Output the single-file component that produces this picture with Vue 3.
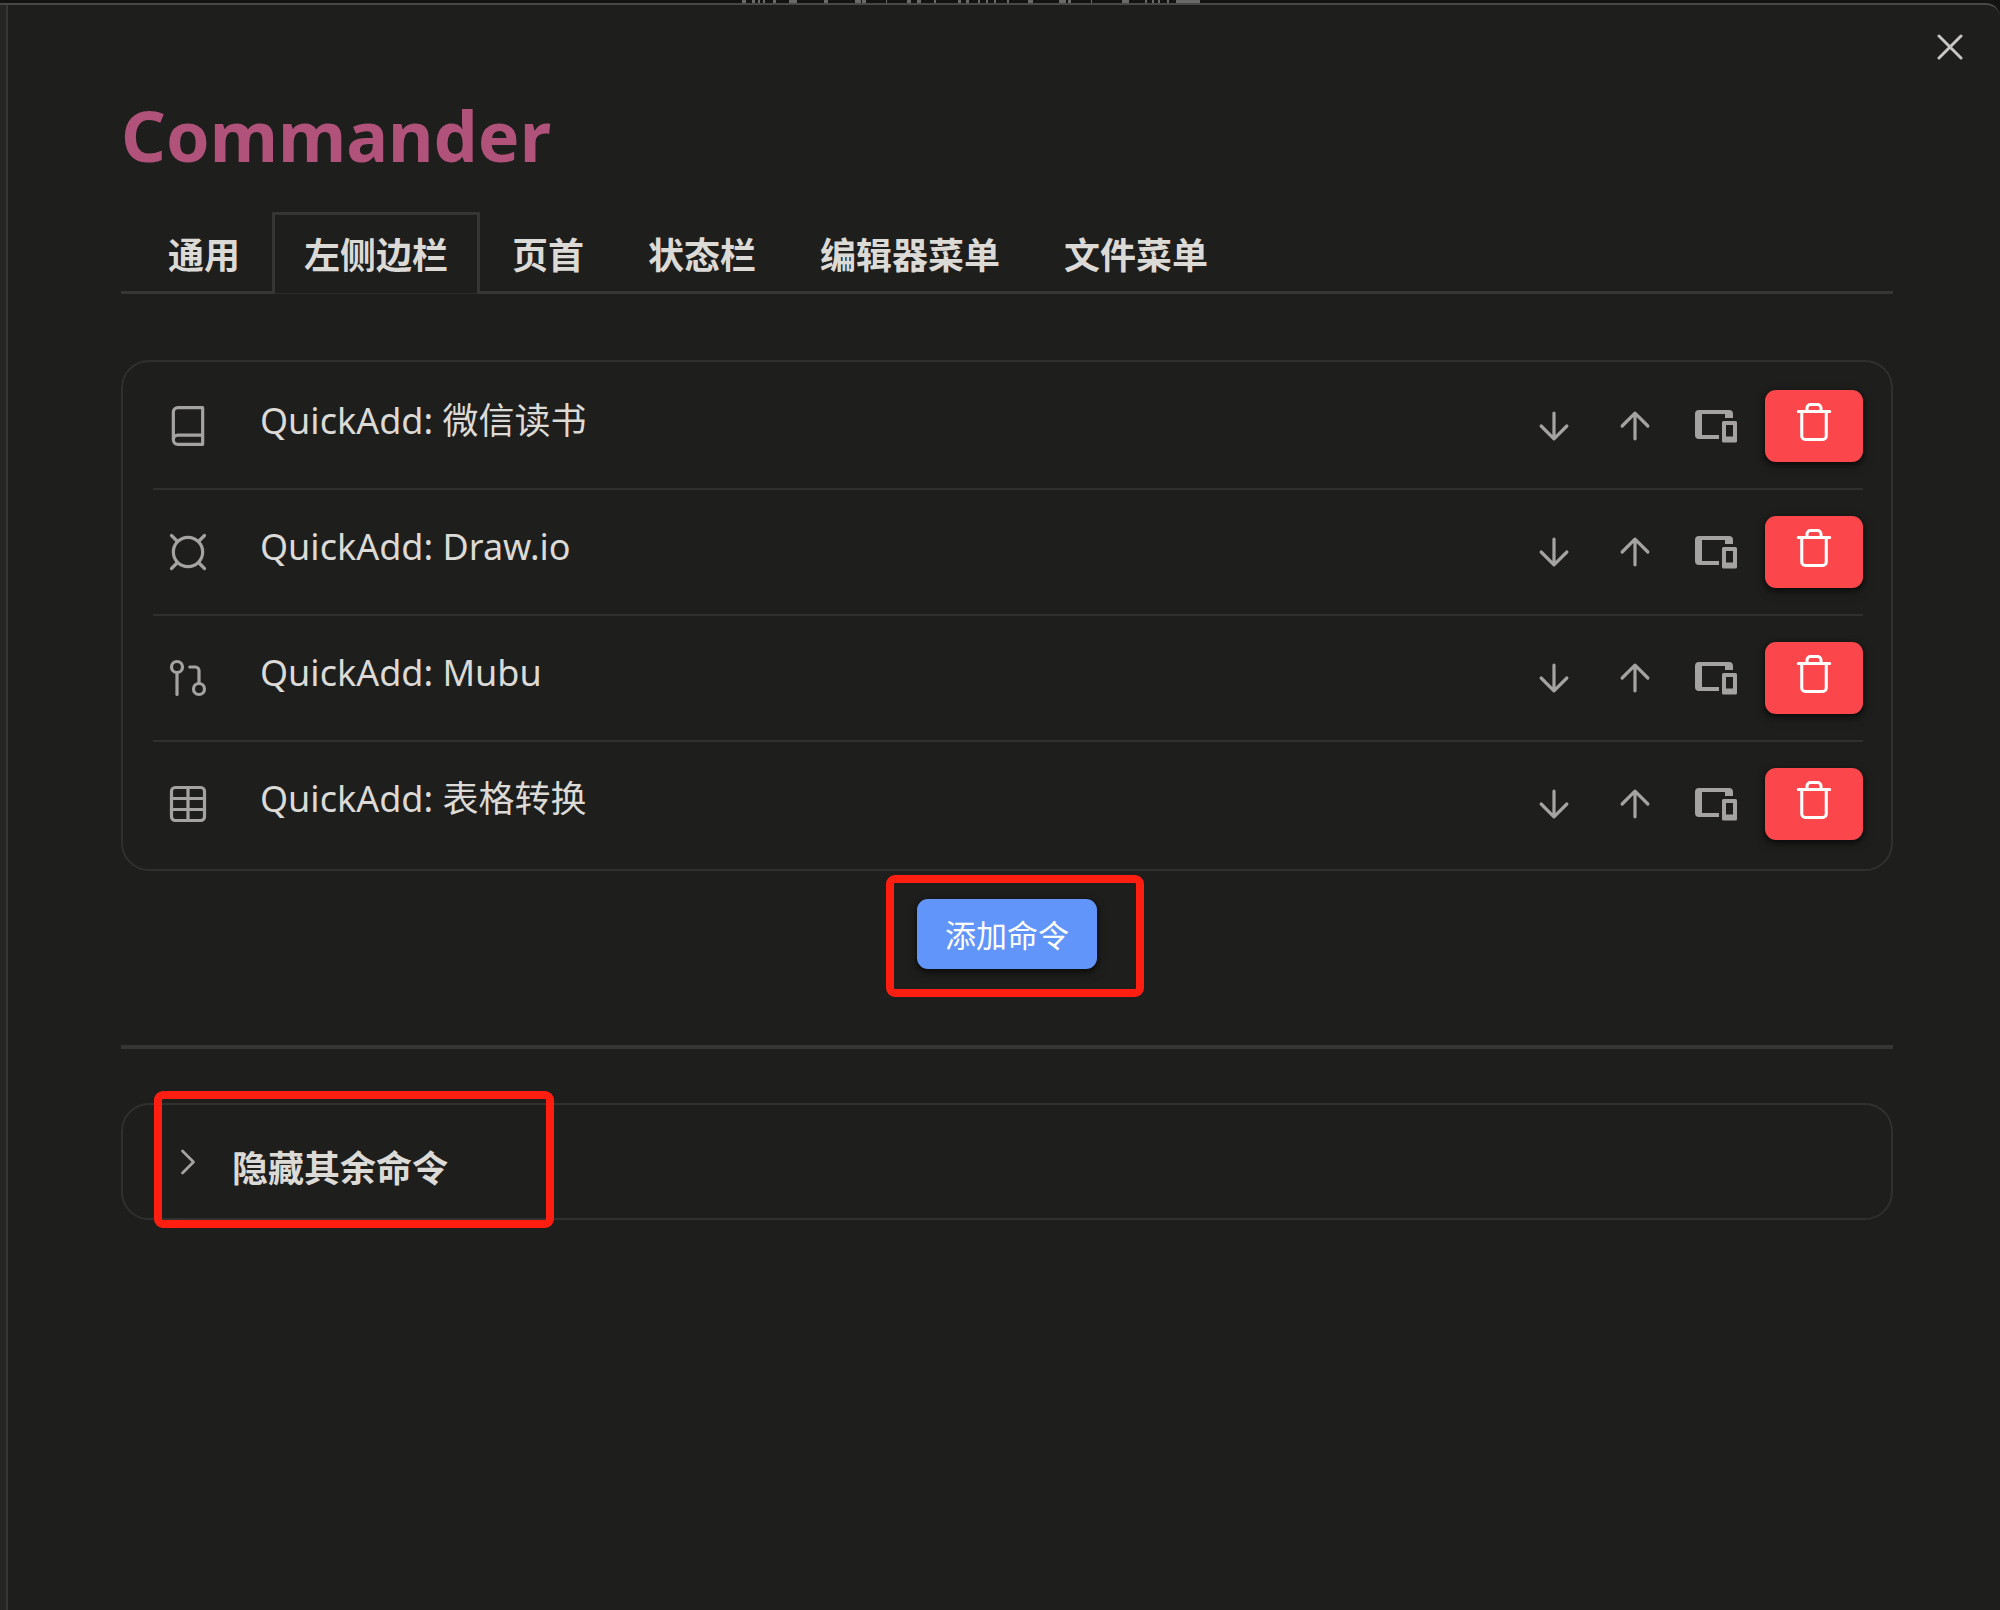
<script setup>
import { ref } from 'vue'

const tabs = ['通用', '左侧边栏', '页首', '状态栏', '编辑器菜单', '文件菜单']
const activeTab = ref(1)

const commands = ref([
  { name: 'QuickAdd: 微信读书', icon: 'book' },
  { name: 'QuickAdd: Draw.io', icon: 'currency' },
  { name: 'QuickAdd: Mubu', icon: 'git' },
  { name: 'QuickAdd: 表格转换', icon: 'table' },
])

const icons = {
  book: ['M4 19.5v-15A2.5 2.5 0 0 1 6.5 2H20v20H6.5A2.5 2.5 0 0 1 4 19.5A2.5 2.5 0 0 1 6.5 17H20'],
  currency: ['M12 4a8 8 0 1 0 0 16a8 8 0 1 0 0-16', 'M3 3l3 3', 'M21 3l-3 3', 'M3 21l3-3', 'M21 21l-3-3'],
  git: ['M18 15a3 3 0 1 0 0 6a3 3 0 1 0 0-6', 'M6 3a3 3 0 1 0 0 6a3 3 0 1 0 0-6', 'M13 6h3a2 2 0 0 1 2 2v7', 'M6 9v12'],
  table: ['M5 3h14a2 2 0 0 1 2 2v14a2 2 0 0 1-2 2H5a2 2 0 0 1-2-2V5a2 2 0 0 1 2-2z', 'M12 3v18', 'M3 9h18', 'M3 15h18'],
}

// x position and width of each visible stroke of the page title behind the dialog
const backdropMarks = [
  [0, 4], [10, 3], [16, 2], [21, 2], [31, 3], [47, 8], [82, 4], [113, 6], [120, 4], [144, 1],
  [165, 4], [175, 4], [192, 2], [216, 3], [224, 3], [236, 2], [244, 2], [252, 2], [265, 2],
  [286, 5], [317, 7], [326, 3], [349, 1], [380, 7], [403, 2], [410, 2], [416, 2], [425, 2], [434, 24],
]

function move(index, step) {
  const target = index + step
  if (target < 0 || target >= commands.value.length) return
  const [item] = commands.value.splice(index, 1)
  commands.value.splice(target, 0, item)
}
</script>

<template>
  <div class="page">
    <div class="backdrop">
      <svg width="458" height="3" viewBox="0 0 458 3" aria-hidden="true">
        <rect v-for="[x, w] in backdropMarks" :key="x" :x="x" y="0" :width="w" height="3" fill="#6a6a6a" />
      </svg>
    </div>
    <div class="dialog">
      <aside class="sidebar"></aside>
      <main class="content">
        <button class="close" type="button" aria-label="关闭">
          <svg viewBox="0 0 26 26" width="26" height="26" fill="none" stroke="currentColor" stroke-width="3" stroke-linecap="round">
            <path d="M2 2l22 22M24 2L2 24" />
          </svg>
        </button>

        <h1>Commander</h1>

        <nav class="tabs" role="tablist">
          <button
            v-for="(tab, i) in tabs"
            :key="tab"
            class="tab"
            :class="{ active: i === activeTab }"
            type="button"
            role="tab"
            :aria-selected="i === activeTab"
            @click="activeTab = i"
          >{{ tab }}</button>
        </nav>

        <ul class="card commands">
          <li v-for="(command, i) in commands" :key="command.name" class="command">
            <svg class="line-icon" viewBox="0 0 24 24">
              <path v-for="d in icons[command.icon]" :key="d" :d="d" />
            </svg>
            <span class="name">{{ command.name }}</span>
            <div class="actions">
              <button class="icon-button" type="button" aria-label="下移" @click="move(i, 1)">
                <svg class="line-icon" viewBox="0 0 24 24"><path d="M12 5v14M19 12l-7 7-7-7" /></svg>
              </button>
              <button class="icon-button" type="button" aria-label="上移" @click="move(i, -1)">
                <svg class="line-icon" viewBox="0 0 24 24"><path d="M12 19V5M5 12l7-7 7 7" /></svg>
              </button>
              <button class="icon-button" type="button" aria-label="设备">
                <svg viewBox="0 0 42 33" width="42" height="33" fill="currentColor" fill-rule="evenodd">
                  <path d="M4 0H34a4 4 0 0 1 4 4V8H30V4H7V25H24V29H4a4 4 0 0 1-4-4V4a4 4 0 0 1 4-4z" />
                  <path d="M28.5 11H40.5a1.5 1.5 0 0 1 1.5 1.5V31a1.5 1.5 0 0 1-1.5 1.5H28.5a1.5 1.5 0 0 1-1.5-1.5V12.5a1.5 1.5 0 0 1 1.5-1.5zM31 15V26.5H38V15z" />
                </svg>
              </button>
            </div>
            <button class="delete" type="button" aria-label="删除" @click="commands.splice(i, 1)">
              <svg class="line-icon" viewBox="0 0 24 24">
                <path d="M3 6h18M19 6v14a2 2 0 0 1-2 2H7a2 2 0 0 1-2-2V6M8 6V4a2 2 0 0 1 2-2h4a2 2 0 0 1 2 2v2" />
              </svg>
            </button>
          </li>
        </ul>

        <div class="add-row">
          <div class="marked">
            <button class="add" type="button">添加命令</button>
            <span class="marker marker-add"></span>
          </div>
        </div>

        <hr />

        <section class="card hidden-commands">
          <button class="disclosure" type="button" aria-expanded="false">
            <svg class="line-icon chevron" viewBox="0 0 24 24"><path d="M9 6l6 6-6 6" /></svg>
            <span>隐藏其余命令</span>
          </button>
          <span class="marker marker-hidden"></span>
        </section>
      </main>
    </div>
  </div>
</template>

<style>
body {
  margin: 0;
  background: #131312;
}
</style>

<style scoped>
.page {
  display: flex;
  flex-direction: column;
  min-height: 100vh;
  color: #dcdad7;
  font-family: "Noto Sans", "Noto Sans CJK SC", sans-serif;
}

.page * {
  box-sizing: border-box;
}

.backdrop {
  display: flex;
  height: 3px;
  padding-left: 37.1%;
}

.dialog {
  flex: 1;
  display: flex;
  border-top: 2px solid #484847;
  border-top-right-radius: 14px;
  background: #1e1e1c;
}

.sidebar {
  width: 8px;
  border-right: 2px solid #363635;
  background: #252524;
}

.content {
  position: relative;
  flex: 1;
  padding: 88px 107px 0 113px;
}

button {
  border: 0;
  padding: 0;
  background: none;
  color: inherit;
  font: inherit;
  cursor: pointer;
}

.close {
  position: absolute;
  top: 22px;
  right: 30px;
  display: grid;
  place-items: center;
  width: 40px;
  height: 40px;
  color: #c8c7c5;
}

h1 {
  margin: 0;
  color: #b05279;
  font-size: 70px;
  font-weight: 700;
  line-height: 84px;
}

.tabs {
  display: flex;
  margin-top: 35px;
  padding-left: 15px;
  box-shadow: inset 0 -3px #363635;
}

.tab {
  height: 82px;
  padding: 2px 29px 0;
  border: 3px solid transparent;
  border-bottom: 0;
  font-size: 36px;
  font-weight: 700;
  line-height: 48px;
}

.tab.active {
  border-color: #363635;
  background: #1e1e1c;
  box-shadow: inset 0 -1px #2b2b2a;
}

.card {
  border: 2px solid #30302f;
  border-radius: 28px;
}

.commands {
  margin: 66px 0 0;
  padding: 2px 28px 3px 30px;
  list-style: none;
}

.command {
  display: flex;
  align-items: center;
  padding: 26px 0;
  border-bottom: 2px solid #30302f;
}

.command:last-child {
  border-bottom: 0;
}

.line-icon {
  display: block;
  flex: none;
  width: 44px;
  height: 44px;
  fill: none;
  stroke: currentColor;
  stroke-width: 1.75;
  stroke-linecap: round;
  stroke-linejoin: round;
  color: #a5a3a1;
}

.command > .line-icon {
  margin-left: 13px;
}

.name {
  flex: 1;
  margin-left: 50px;
  padding-bottom: 10px;
  font-size: 36px;
  line-height: 48px;
}

.actions {
  display: flex;
  gap: 37px;
  color: #a5a3a1;
}

.icon-button {
  display: grid;
  place-items: center;
  width: 44px;
  height: 44px;
}

.delete {
  display: flex;
  justify-content: center;
  width: 98px;
  height: 72px;
  margin-left: 27px;
  padding-top: 11px;
  border-radius: 11px;
  background: #fb464c;
  box-shadow: 0 2px 4px #0c0c0c, 0 4px 10px #141413;
}

.delete .line-icon {
  width: 42px;
  height: 42px;
  color: #fff;
}

.add-row {
  display: flex;
  justify-content: center;
  margin-top: 28px;
}

.marked {
  position: relative;
}

.add {
  width: 180px;
  height: 70px;
  padding-top: 2px;
  border-radius: 11px;
  background: #6295fa;
  box-shadow: 0 2px 4px #0c0c0c, 0 4px 10px #141413;
  color: #fff;
  font-size: 31px;
  line-height: 40px;
}

.marker {
  position: absolute;
  border: 8px solid #ff1e10;
  border-radius: 9px;
  pointer-events: none;
}

.marker-add {
  inset: -24px -47px -28px -31px;
}

hr {
  height: 4px;
  margin: 76px 0 54px;
  border: 0;
  background: #363635;
}

.hidden-commands {
  position: relative;
  height: 117px;
}

.disclosure {
  display: flex;
  align-items: center;
  gap: 22px;
  width: 100%;
  height: 100%;
  padding-left: 43px;
  font-size: 36px;
  font-weight: 700;
  line-height: 48px;
}

.disclosure span {
  padding-top: 14px;
}

.chevron {
  stroke-width: 1.5;
}

.marker-hidden {
  top: -14px;
  left: 31px;
  width: 400px;
  height: 137px;
}
</style>
